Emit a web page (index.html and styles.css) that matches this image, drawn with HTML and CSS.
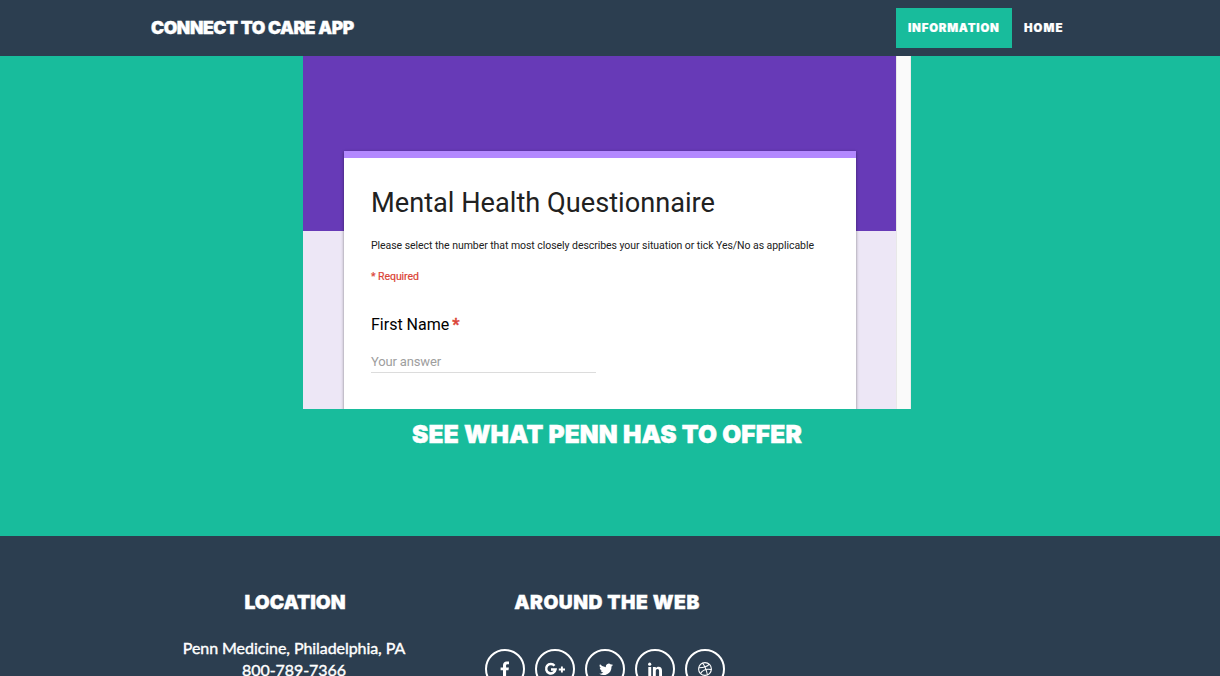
FILE: index.html
```html
<!DOCTYPE html>
<html lang="en">
<head>
<meta charset="utf-8">
<title>Connect to Care App</title>
<link rel="stylesheet" href="styles.css">
</head>
<body>
<nav class="navbar">
  <div class="container navbar-inner">
    <a class="brand">CONNECT TO CARE APP</a>
    <div class="nav-links"><a class="nav-link active"><span class="info-label">INFORMATION</span></a><a class="nav-link home">HOME</a></div>
  </div>
</nav>
<header class="hero">
  <div class="form-frame">
    <div class="form-page">
      <div class="form-card">
        <h1 class="form-title">Mental Health Questionnaire</h1>
        <p class="form-desc">Please select the number that most closely describes your situation or tick Yes/No as applicable</p>
        <p class="form-required">* Required</p>
        <div class="question">First Name <span class="star">*</span></div>
        <div class="answer">Your answer</div>
      </div>
    </div>
    <div class="scroll-track"></div>
  </div>
  <h2 class="offer">SEE WHAT PENN HAS TO OFFER</h2>
</header>
<footer class="footer">
  <div class="container footer-cols">
    <div class="footer-col">
      <h3 class="footer-heading location">LOCATION</h3>
      <p class="address">Penn Medicine, Philadelphia, PA<br>800-789-7366</p>
    </div>
    <div class="footer-col">
      <h3 class="footer-heading web">AROUND THE WEB</h3>
      <div class="socials">
        <a class="social"><svg width="20" height="20" viewBox="0 0 20 20"><path fill="#fff" d="M14 2.600v2.600h-1.500c-1.100 0-1.400.6-1.400 1.400v1.800h2.800l-.4 2.900h-2.400V18H8V11.300H5.600V8.400H8V6.200C8 3.800 9.500 2.400 11.700 2.400c1.100 0 2 .1 2.300.2z"/></svg></a>
        <a class="social"><svg width="24" height="20" viewBox="0 0 24 20"><path fill="none" stroke="#fff" stroke-width="2.500" d="M11.500 6.700A4.700 4.700 0 1 0 12.500 10.500H8"/><path fill="none" stroke="#fff" stroke-width="1.900" d="M15.800 10.500h6.200M18.900 7.400v6.200"/></svg></a>
        <a class="social"><svg width="17" height="17" viewBox="0 0 24 24"><path fill="#fff" d="M22.500 5.600a8 8 0 0 1-2.200.7 4 4 0 0 0 1.700-2.200 8 8 0 0 1-2.500 1 4 4 0 0 0-6.900 3.600A11.300 11.300 0 0 1 4.300 4.500a4 4 0 0 0 1.300 5.400 4 4 0 0 1-1.800-.5 4 4 0 0 0 3.200 4 4 4 0 0 1-1.800.1 4 4 0 0 0 3.700 2.800 8 8 0 0 1-5.900 1.700A11.300 11.300 0 0 0 20.400 7.900c.8-.6 1.500-1.400 2.100-2.300z"/></svg></a>
        <a class="social"><svg width="20" height="20" viewBox="0 0 20 20"><path fill="#fff" d="M3.300 8h2.900V17h-2.900zM7.900 8h2.900v1.200c.5-.8 1.400-1.500 2.900-1.500 2.100 0 3.300 1.400 3.300 4V17h-2.900v-5c0-1.300-.5-2.100-1.600-2.100-1.100 0-1.700.9-1.700 2.100v5H7.900z"/><circle cx="4.700" cy="5.200" r="1.600" fill="#fff"/></svg></a>
        <a class="social"><svg width="20" height="20" viewBox="0 0 20 20" fill="none" stroke="#fff" stroke-width="1.100"><circle cx="10" cy="10" r="6.400"/><path d="M7.500 4c2.400 3 4 6.600 4.900 12M3.700 8.700c4.800.1 8.300-.9 10.600-3.600M5.600 14.600c1.900-3.600 5.500-5 10.800-4"/></svg></a>
      </div>
    </div>
  </div>
</footer>
</body>
</html>
```
FILE: styles.css
```css
* { box-sizing: border-box; }
html, body { margin: 0; height: 676px; overflow: hidden; }
body { display: flex; flex-direction: column; background: #2c3e50; color: #fff; font-family: Lato, sans-serif; }
h1, h2, h3, p { margin: 0; }
.container { width: 936px; margin-left: 139px; }
.navbar { flex: none; height: 56px; background: #2c3e50; font-family: Inter, sans-serif; font-weight: 900; }
.navbar-inner { height: 56px; display: flex; align-items: center; justify-content: space-between; padding-left: 12px; }
.brand { font-size: 17.500px; letter-spacing: -0.400px; line-height: 22px; padding-bottom: 1px; white-space: nowrap; -webkit-text-stroke: 0.4px #fff; }
.nav-links { display: flex; }
.nav-link { height: 40px; line-height: 40px; padding: 0 12px; font-size: 11.400px; letter-spacing: 1.050px; -webkit-text-stroke: 0.2px #fff; }
.nav-link.active { width: 116px; background: #18bc9c; }
.nav-link.home { width: 63px; white-space: nowrap; }
.info-label { letter-spacing: 0.800px; }
.hero { flex: none; height: 480px; background: #18bc9c; }
.form-frame { width: 608px; height: 353px; margin-left: 303px; display: flex; overflow: hidden; }
.form-page { width: 593px; height: 353px; padding: 95px 40px 0 41px; background: linear-gradient(#673ab7 175px, #ede7f6 175px); font-family: Roboto, sans-serif; }
.form-card { width: 512px; height: 280px; background: #fff; border-top: 7px solid #b388ff; padding: 27px 27px 0; box-shadow: 0 1px 3px rgba(0, 0, 0, 0.45); color: #212121; }
.scroll-track { width: 15px; background: #fafafa; border-left: 1px solid #e8e8e8; border-right: 1px solid #ededed; }
.form-title { font-size: 27.200px; line-height: 36px; font-weight: 400; white-space: nowrap; }
.form-desc { font-size: 10.500px; letter-spacing: -0.052px; line-height: 16px; margin-top: 17px; white-space: nowrap; }
.form-required { font-size: 10.500px; letter-spacing: -0.05px; line-height: 16px; margin-top: 15px; color: #db4437; -webkit-text-stroke: 0.2px #db4437; }
.question { font-size: 16px; line-height: 22px; margin-top: 29px; color: #000; }
.star { color: #db4437; font-weight: 700; margin-left: -1px; -webkit-text-stroke: 0.4px #db4437; }
.answer { width: 225px; height: 21px; margin-top: 16px; border-bottom: 1px solid #dcdcdc; color: #9e9e9e; font-size: 13px; letter-spacing: -0.15px; line-height: 20px; }
.offer { width: 608px; margin-left: 303px; padding-top: 10px; text-align: center; font: 900 24.500px/30px Inter, sans-serif; letter-spacing: 0.150px; white-space: nowrap; -webkit-text-stroke: 0.5px #fff; }
.footer { flex: none; height: 140px; padding-top: 54px; overflow: hidden; background: #2c3e50; }
.footer-cols { display: grid; grid-template-columns: repeat(3, 312px); }
.footer-col { text-align: center; }
.footer-heading { font: 900 19.300px/24px Inter, sans-serif; letter-spacing: 0; -webkit-text-stroke: 0.4px #fff; }
.footer-heading.web { letter-spacing: 0.500px; }
.address { margin-top: 23px; padding-right: 2px; font-size: 16px; letter-spacing: -0.060px; line-height: 22px; -webkit-text-stroke: 0.4px #fff; }
.socials { display: flex; gap: 10px; margin: 35px 0 0 34px; }
.social { width: 40px; height: 40px; border: 2px solid #fff; border-radius: 50%; display: flex; align-items: center; justify-content: center; }
```
